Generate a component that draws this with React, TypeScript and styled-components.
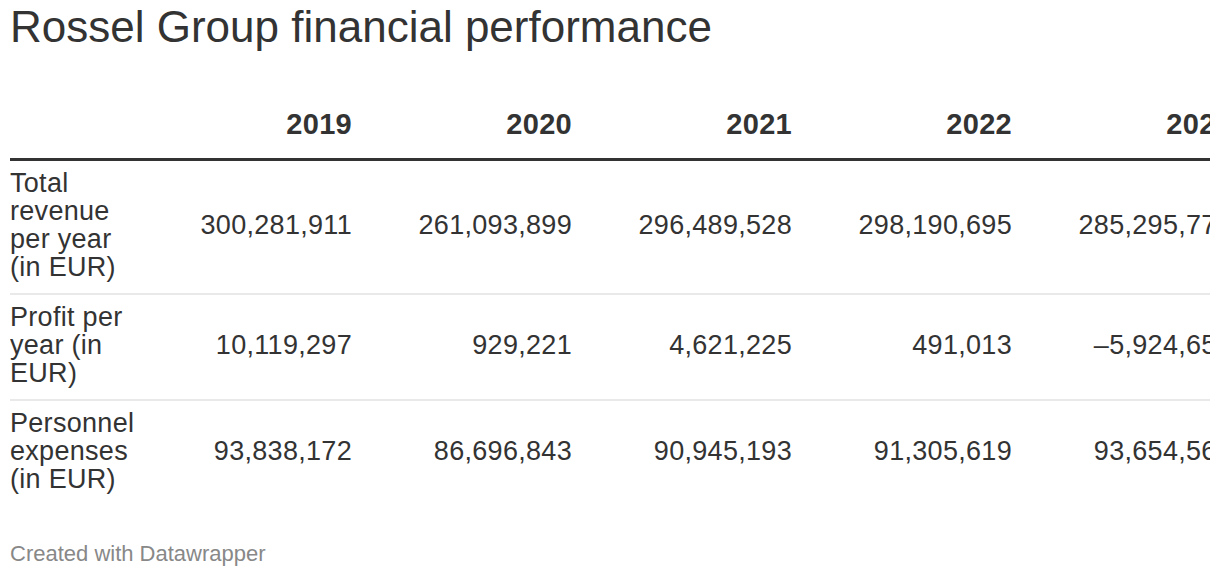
import React from "react";
import styled, { createGlobalStyle } from "styled-components";

const Global = createGlobalStyle`
  html, body { margin: 0; padding: 0; background: #fff; }
  body { font-family: "Liberation Sans", Arial, sans-serif; color: #333; }
`;

const Page = styled.div`
  width: 1200px;
  padding: 0 10px;
  overflow: hidden;
`;

const Title = styled.h1`
  margin: 1px 0 0;
  font-size: 44px;
  line-height: 52px;
  font-weight: 400;
  color: #333;
  white-space: nowrap;
`;

const TableClip = styled.div`
  width: 1200px;
  overflow: hidden;
`;

const Table = styled.table`
  width: 1228px;
  table-layout: fixed;
  border-collapse: collapse;
  font-size: 27px;
  letter-spacing: 0.3px;
`;

const HeadRow = styled.tr`
  border-bottom: 3px solid #333;
`;

const HeadCell = styled.th`
  padding: 55px 6px 18px 0;
  font-size: 29px;
  line-height: 32px;
  font-weight: 700;
  text-align: right;
  vertical-align: bottom;
  color: #333;
`;

const BodyRow = styled.tr<{ $last?: boolean }>`
  border-bottom: ${(p) => (p.$last ? "none" : "2px solid #e9e9e9")};
`;

const LabelCell = styled.td`
  padding: 8px 0 12px 0;
  line-height: 28px;
  text-align: left;
  vertical-align: middle;
  color: #333;
`;

const NumCell = styled.td`
  padding: 8px 6px 12px 0;
  line-height: 28px;
  text-align: right;
  vertical-align: middle;
  white-space: nowrap;
  color: #333;
`;

const Footer = styled.div`
  margin-top: 36px;
  font-size: 22px;
  line-height: 26px;
  color: #888;
`;

const years = ["2019", "2020", "2021", "2022", "2023"];

const rows = [
  {
    label: "Total revenue per year (in EUR)",
    values: ["300,281,911", "261,093,899", "296,489,528", "298,190,695", "285,295,771"],
  },
  {
    label: "Profit per year (in EUR)",
    values: ["10,119,297", "929,221", "4,621,225", "491,013", "\u20135,924,654"],
  },
  {
    label: "Personnel expenses (in EUR)",
    values: ["93,838,172", "86,696,843", "90,945,193", "91,305,619", "93,654,566"],
  },
];

export default function App() {
  return (
    <Page>
      <Global />
      <Title>Rossel Group financial performance</Title>
      <TableClip>
        <Table>
          <colgroup>
            <col style={{ width: 128 }} />
            {years.map((y) => (
              <col key={y} style={{ width: 220 }} />
            ))}
          </colgroup>
          <thead>
            <HeadRow>
              <HeadCell />
              {years.map((y) => (
                <HeadCell key={y}>{y}</HeadCell>
              ))}
            </HeadRow>
          </thead>
          <tbody>
            {rows.map((r, i) => (
              <BodyRow key={r.label} $last={i === rows.length - 1}>
                <LabelCell>{r.label}</LabelCell>
                {r.values.map((v, j) => (
                  <NumCell key={j}>{v}</NumCell>
                ))}
              </BodyRow>
            ))}
          </tbody>
        </Table>
      </TableClip>
      <Footer>Created with Datawrapper</Footer>
    </Page>
  );
}
